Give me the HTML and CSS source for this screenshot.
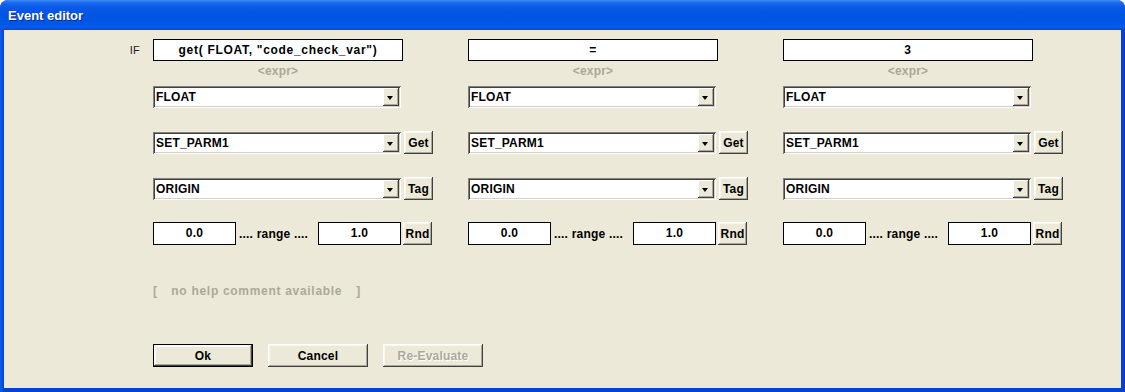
FILE: index.html
```html
<!DOCTYPE html>
<html lang="en">
<head>
    <meta charset="UTF-8">
    <title>Event editor</title>
    <link rel="stylesheet" href="styles.css">
</head>
<body>
    <div class="window">
        <div class="titlebar">
            <span class="title">Event editor</span>
        </div>
        <div class="client">
            <div class="row expr-row">
                <div class="gutter">IF</div>
                <div class="cell stack">
                    <div class="expr">get( FLOAT, "code_check_var")</div>
                    <div class="hint">&lt;expr&gt;</div>
                </div>
                <div class="cell stack">
                    <div class="expr">=</div>
                    <div class="hint">&lt;expr&gt;</div>
                </div>
                <div class="cell stack">
                    <div class="expr">3</div>
                    <div class="hint">&lt;expr&gt;</div>
                </div>
            </div>

            <div class="row type-row">
                <div class="gutter"></div>
                <div class="cell"><div class="combo"><span>FLOAT</span><i class="drop"></i></div></div>
                <div class="cell"><div class="combo"><span>FLOAT</span><i class="drop"></i></div></div>
                <div class="cell"><div class="combo"><span>FLOAT</span><i class="drop"></i></div></div>
            </div>

            <div class="row parm-row">
                <div class="gutter"></div>
                <div class="cell"><div class="combo"><span>SET_PARM1</span><i class="drop"></i></div><button class="btn small">Get</button></div>
                <div class="cell"><div class="combo"><span>SET_PARM1</span><i class="drop"></i></div><button class="btn small">Get</button></div>
                <div class="cell"><div class="combo"><span>SET_PARM1</span><i class="drop"></i></div><button class="btn small">Get</button></div>
            </div>

            <div class="row tag-row">
                <div class="gutter"></div>
                <div class="cell"><div class="combo"><span>ORIGIN</span><i class="drop"></i></div><button class="btn small">Tag</button></div>
                <div class="cell"><div class="combo"><span>ORIGIN</span><i class="drop"></i></div><button class="btn small">Tag</button></div>
                <div class="cell"><div class="combo"><span>ORIGIN</span><i class="drop"></i></div><button class="btn small">Tag</button></div>
            </div>

            <div class="row range-row">
                <div class="gutter"></div>
                <div class="cell range">
                    <div class="num">0.0</div><span class="range-label">.... range ....</span><div class="num">1.0</div><button class="btn small rnd">Rnd</button>
                </div>
                <div class="cell range">
                    <div class="num">0.0</div><span class="range-label">.... range ....</span><div class="num">1.0</div><button class="btn small rnd">Rnd</button>
                </div>
                <div class="cell range">
                    <div class="num">0.0</div><span class="range-label">.... range ....</span><div class="num">1.0</div><button class="btn small rnd">Rnd</button>
                </div>
            </div>

            <div class="help">[    <span class="help-text">no help comment available</span>    ]</div>

            <div class="actions">
                <button class="btn wide default">Ok</button>
                <button class="btn wide">Cancel</button>
                <button class="btn wide" disabled>Re-Evaluate</button>
            </div>
        </div>
    </div>
</body>
</html>
```

FILE: styles.css
```css
body {
    margin: 0;
    background: #fff;
    font-family: "Liberation Sans", Arial, sans-serif;
    font-size: 12px;
    font-weight: bold;
    letter-spacing: 0.2px;
    color: #000;
}
.window {
    width: 1125px;
    height: 392px;
    display: flex;
    flex-direction: column;
    border-radius: 8px 8px 0 0;
    background: linear-gradient(to right, #0a5ef0 0, #0842d4 4px, #0842d4 1121px, #0a3cc8 100%);
    overflow: hidden;
}
.titlebar {
    height: 30px;
    flex: none;
    display: flex;
    align-items: center;
    padding-left: 8px;
    background: linear-gradient(to bottom, #3d8cf6 0, #1867ee 3px, #0a5ae6 7px, #0055e3 14px, #0056e6 24px, #005ef0 27px, #0047d8 30px);
}
.title {
    color: #fff;
    font-size: 13px;
    font-weight: bold;
    letter-spacing: 0;
    text-shadow: 1px 1px #0a2a8a;
    padding-top: 1px;
}
.client {
    flex: 1;
    margin: 0 4px 4px;
    background: #ece9d8;
    padding-top: 9px;
    box-sizing: border-box;
}
.row {
    display: flex;
    align-items: center;
}
.gutter {
    width: 149px;
    flex: none;
    box-sizing: border-box;
    padding-right: 13px;
    text-align: right;
    font-size: 11px;
    font-weight: normal;
    color: #222;
}
.cell {
    width: 315px;
    flex: none;
    display: flex;
    align-items: center;
}
.stack {
    flex-direction: column;
    align-items: stretch;
    width: 250px;
    margin-right: 65px;
}
.expr-row {
    align-items: flex-start;
}
.expr-row .gutter {
    line-height: 22px;
}
.expr {
    height: 22px;
    line-height: 20px;
    box-sizing: border-box;
    border: 1px solid #000;
    background: #fff;
    text-align: center;
    letter-spacing: 0.7px;
    white-space: pre;
}
.hint {
    margin-top: 2px;
    line-height: 16px;
    text-align: center;
    color: #aca899;
}
.type-row {
    margin-top: 7px;
}
.parm-row,
.tag-row {
    margin-top: 23px;
}
.range-row {
    margin-top: 22px;
}
.combo {
    width: 248px;
    height: 22px;
    box-sizing: border-box;
    display: flex;
    align-items: center;
    justify-content: space-between;
    padding: 2px 2px 2px 3px;
    background: #fff;
    box-shadow: inset 1px 1px #808080, inset -1px -1px #fff, inset 2px 2px #404040, inset -2px -2px #d4d0c8;
}
.drop {
    width: 16px;
    height: 18px;
    flex: none;
    position: relative;
    background: #ece9d8;
    box-shadow: inset -1px -1px #404040, inset 1px 1px #fff, inset -2px -2px #aca899;
}
.drop::after {
    content: "";
    position: absolute;
    left: 4px;
    top: 8px;
    border-left: 3.5px solid transparent;
    border-right: 3.5px solid transparent;
    border-top: 4px solid #000;
}
.btn {
    font: inherit;
    letter-spacing: inherit;
    color: #000;
    background: #ece9d8;
    border: none;
    padding: 0;
    height: 23px;
    box-shadow: inset -1px -1px #404040, inset 1px 1px #fff, inset -2px -2px #aca899, inset 2px 2px #f7f6f0;
    cursor: pointer;
}
.small {
    width: 29px;
    margin-left: 3px;
}
.rnd {
    margin-left: 2px;
}
.num {
    width: 83px;
    height: 23px;
    line-height: 21px;
    box-sizing: border-box;
    border: 1px solid #000;
    background: #fff;
    text-align: center;
}
.range-label {
    width: 82px;
    box-sizing: border-box;
    padding-left: 3px;
    white-space: pre;
}
.help {
    margin: 38px 0 0 149px;
    line-height: 16px;
    color: #aca899;
    white-space: pre;
}
.help-text {
    letter-spacing: 0.7px;
}
.actions {
    display: flex;
    gap: 15px;
    margin: 45px 0 0 149px;
}
.wide {
    width: 100px;
    height: 23px;
}
.default {
    border: 1px solid #000;
}
.btn:disabled {
    color: #aca899;
    text-shadow: 1px 1px #fff;
    cursor: default;
}
```
